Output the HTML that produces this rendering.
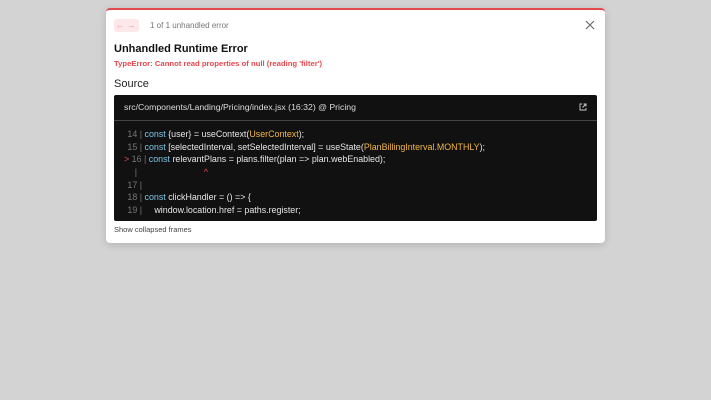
<!DOCTYPE html>
<html><head><style>
body{margin:0;width:711px;height:400px;background:#d3d3d3;font-family:"Liberation Sans",sans-serif;position:relative;overflow:hidden}
.m{position:absolute;left:106px;top:8px;width:499px;height:235px;background:#fff;border-top:2.5px solid #e5484d;border-radius:4px;box-sizing:border-box;box-shadow:0 2px 8px rgba(0,0,0,.15)}
.nav{position:absolute;left:8px;top:9px;width:25px;height:13px;background:#fce8e8;border-radius:3px;color:#f09a9a;font-size:9px;line-height:13px;text-align:center;letter-spacing:2px}
.cnt{position:absolute;left:44px;top:11px;font-size:8px;color:#777}
.x{position:absolute;right:10px;top:10px}
h1{position:absolute;left:8px;top:33px;margin:0;font-size:11px;font-weight:bold;color:#111}
.err{position:absolute;left:8px;top:49px;font-size:7.7px;font-weight:bold;color:#e5484d}
.src{position:absolute;left:8px;top:68px;font-size:11px;color:#222}
.code{position:absolute;left:8px;top:85px;width:483px;height:126px;background:#111;border-radius:2px}
.hd{height:25px;border-bottom:1px solid #444;color:#ddd;font-size:8.7px;line-height:25px;padding-left:10px;position:relative}
.ln{position:absolute;left:6px;font-size:8.9px;color:#e6e6e6;white-space:pre}
.g{color:#777}.b{color:#7fc4e8}.y{color:#f0b545}.r{color:#e5484d}
.sh{position:absolute;left:8px;top:215px;font-size:7.5px;color:#444}
</style></head><body>
<div class="m">
<div class="nav">←→</div>
<div class="cnt">1 of 1 unhandled error</div>
<svg class="x" width="10" height="10" viewBox="0 0 10 10"><path d="M1 1L9 9M9 1L1 9" stroke="#666" stroke-width="1.1"/></svg>
<h1>Unhandled Runtime Error</h1>
<div class="err">TypeError: Cannot read properties of null (reading 'filter')</div>
<div class="src">Source</div>
<div class="code">
<div class="hd">src/Components/Landing/Pricing/index.jsx (16:32) @ Pricing
<svg style="position:absolute;right:10px;top:8px" width="8" height="8" viewBox="0 0 8 8"><path d="M3 1H1V7H7V5M4.5 1H7V3.5M7 1L3.5 4.5" stroke="#ccc" fill="none" stroke-width="0.9"/></svg></div>
<div class="ln" style="top:34px"><span class="g">   14 | </span><span class="b">const</span> {user} = useContext(<span class="y">UserContext</span>);</div>
<div class="ln" style="top:47px"><span class="g">   15 | </span><span class="b">const</span> [selectedInterval, setSelectedInterval] = useState(<span class="y">PlanBillingInterval.MONTHLY</span>);</div>
<div class="ln" style="top:59px;left:10px"><span class="r">&gt; </span><span class="g">16 | </span><span class="b">const</span> relevantPlans = plans.filter(plan =&gt; plan.webEnabled);</div>
<div class="ln" style="top:72px"><span class="g">      | </span><span class="r">                          ^</span></div>
<div class="ln" style="top:85px"><span class="g">   17 |</span></div>
<div class="ln" style="top:97px"><span class="g">   18 | </span><span class="b">const</span> clickHandler = () =&gt; {</div>
<div class="ln" style="top:110px"><span class="g">   19 | </span>    window.location.href = paths.register;</div>
</div>
<div class="sh">Show collapsed frames</div>
</div>
</body></html>
